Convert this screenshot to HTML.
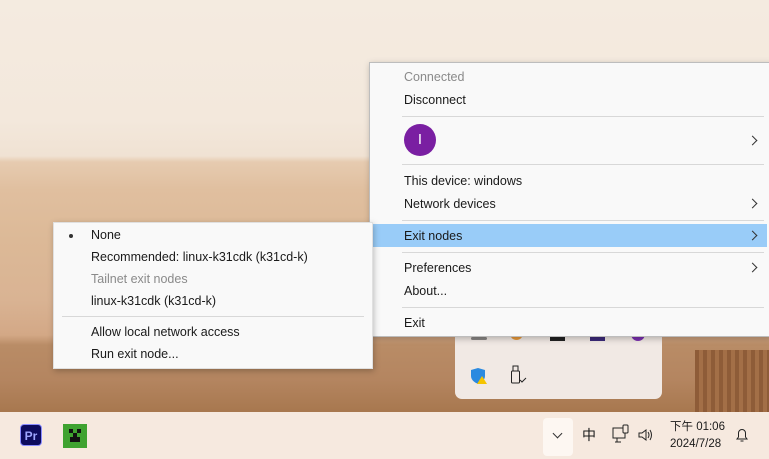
<!DOCTYPE html>
<html><head><meta charset="utf-8"><style>
body{margin:0;width:769px;height:459px;overflow:hidden;position:relative;font-family:"Liberation Sans","Noto Sans CJK TC",sans-serif;font-size:12.5px;color:#1a1a1a;
background:linear-gradient(180deg,#f4ebe0 0,#f3e8dc 120px,#f0e2d3 156px,#e6cbb0 162px,#e0bf9f 190px,#dcb997 240px,#d9b393 300px,#d3a886 335px,#b98c66 345px,#b48560 380px,#a8784f 411px);}
.abs{position:absolute}
.menu{position:absolute;background:#f9f9f9;border:1px solid #e0e0e0;box-shadow:1px 2px 6px rgba(0,0,0,.25)}
.t{position:absolute;white-space:nowrap;line-height:16px}
.sep{position:absolute;height:1px;background:#d8d8d8}
.chev{position:absolute;width:6px;height:6px;border-right:1.3px solid #333;border-top:1.3px solid #333;transform:rotate(45deg)}
</style></head><body>
<div class="abs" style="left:695px;top:350px;width:74px;height:62px;background:repeating-linear-gradient(90deg,#8e5c38 0 4px,#a36f47 4px 8px)"></div>
<div class="abs" style="left:455px;top:325px;width:207px;height:74px;background:#f1e9e4;border-radius:0 0 7px 7px"></div>
<div class="abs" style="left:471px;top:337px;width:16px;height:3px;background:#444;border-radius:2px;opacity:.6"></div>
<div class="abs" style="left:510px;top:332px;width:13px;height:8px;background:#e99a3a;border-radius:0 0 7px 7px"></div>
<div class="abs" style="left:550px;top:334px;width:15px;height:7px;background:#222"></div>
<div class="abs" style="left:590px;top:334px;width:15px;height:7px;background:#3c2a7a"></div>
<div class="abs" style="left:631px;top:332px;width:14px;height:9px;background:#7b2fb0;border-radius:0 0 7px 7px"></div>
<svg class="abs" style="left:470px;top:367px" width="18" height="18"><path d="M8 1 L15 3 L15 9 Q15 14 8 17 Q1 14 1 9 L1 3Z" fill="#2b8ae0"/><path d="M12 9 L17 17 L7 17Z" fill="#f5c400"/></svg>
<svg class="abs" style="left:510px;top:365px" width="18" height="20"><rect x="3" y="1" width="5" height="5" fill="none" stroke="#222"/><rect x="1.5" y="6" width="8" height="12" rx="1" fill="none" stroke="#222"/><path d="M10 15 l2 2 4-4" fill="none" stroke="#222"/></svg>
<div class="menu" style="left:369px;top:62px;width:400px;height:273px;border-color:#bdbdbd">
<div class="t" style="left:34px;top:6px;color:#8a8a8a">Connected</div>
<div class="t" style="left:34px;top:29px">Disconnect</div>
<div class="sep" style="left:32px;top:53px;width:362px"></div>
<div class="abs" style="left:34px;top:61px;width:32px;height:32px;border-radius:50%;background:#7a1fa2;color:#fff;text-align:center;line-height:32px;font-size:15px">I</div>
<div class="chev" style="left:379px;top:74px"></div>
<div class="sep" style="left:32px;top:101px;width:362px"></div>
<div class="t" style="left:34px;top:110px">This device: windows</div>
<div class="t" style="left:34px;top:133px">Network devices</div>
<div class="chev" style="left:379px;top:137px"></div>
<div class="sep" style="left:32px;top:157px;width:362px"></div>
<div class="abs" style="left:3px;top:161px;width:394px;height:23px;background:#99ccf8"></div>
<div class="t" style="left:34px;top:165px">Exit nodes</div>
<div class="chev" style="left:379px;top:169px"></div>
<div class="sep" style="left:32px;top:189px;width:362px"></div>
<div class="t" style="left:34px;top:197px">Preferences</div>
<div class="chev" style="left:379px;top:201px"></div>
<div class="t" style="left:34px;top:220px">About...</div>
<div class="sep" style="left:32px;top:244px;width:362px"></div>
<div class="t" style="left:34px;top:252px">Exit</div>
</div>
<div class="menu" style="left:53px;top:222px;width:318px;height:145px">
<div class="abs" style="left:15px;top:11px;width:4px;height:4px;border-radius:50%;background:#333"></div>
<div class="t" style="left:37px;top:4px">None</div>
<div class="t" style="left:37px;top:26px">Recommended: linux-k31cdk (k31cd-k)</div>
<div class="t" style="left:37px;top:48px;color:#8a8a8a">Tailnet exit nodes</div>
<div class="t" style="left:37px;top:70px">linux-k31cdk (k31cd-k)</div>
<div class="sep" style="left:8px;top:93px;width:302px"></div>
<div class="t" style="left:37px;top:101px">Allow local network access</div>
<div class="t" style="left:37px;top:123px">Run exit node...</div>
</div>
<div class="abs" style="left:0;top:412px;width:769px;height:47px;background:#f6e9df"></div>
<div class="abs" style="left:20px;top:424px;width:22px;height:22px;background:#0d0b5e;border:1px solid #8a8cff;border-radius:4px;color:#9ea6ff;font-weight:bold;font-size:12px;line-height:22px;text-align:center;box-sizing:border-box">Pr</div>
<div class="abs" style="left:63px;top:424px;width:24px;height:24px;background:#3fa230"></div>
<div class="abs" style="left:69px;top:429px;width:4px;height:4px;background:#111"></div>
<div class="abs" style="left:77px;top:429px;width:4px;height:4px;background:#111"></div>
<div class="abs" style="left:73px;top:433px;width:4px;height:6px;background:#111"></div>
<div class="abs" style="left:70px;top:437px;width:10px;height:5px;background:#111"></div>
<div class="abs" style="left:543px;top:418px;width:30px;height:38px;background:#fdf7f2;border-radius:4px"></div>
<div class="chev" style="left:554px;top:430px;transform:rotate(135deg)"></div>
<div class="t" style="left:582px;top:427px;font-size:14px">中</div>
<svg class="abs" style="left:612px;top:424px" width="20" height="22"><rect x="1" y="4" width="12" height="10" fill="none" stroke="#222"/><path d="M5 14 v4 M3 18 h6" stroke="#222"/><rect x="11" y="1" width="5" height="8" rx="1" fill="#f6e9df" stroke="#222"/></svg>
<svg class="abs" style="left:637px;top:427px" width="18" height="16"><path d="M2 6 h3 l4-3 v10 l-4-3 h-3z" fill="none" stroke="#222"/><path d="M11 5 q2 3 0 6 M13 3 q3 5 0 10" fill="none" stroke="#222"/></svg>
<div class="t" style="left:670px;top:419px;font-size:11.5px">下午 01:06</div>
<div class="t" style="left:670px;top:436px;font-size:11.5px">2024/7/28</div>
<svg class="abs" style="left:734px;top:427px" width="16" height="17"><path d="M3 12 h10 l-1.5-2 v-4 a3.5 3.5 0 0 0 -7 0 v4z M6.5 14 h3" fill="none" stroke="#222"/></svg>
</body></html>
